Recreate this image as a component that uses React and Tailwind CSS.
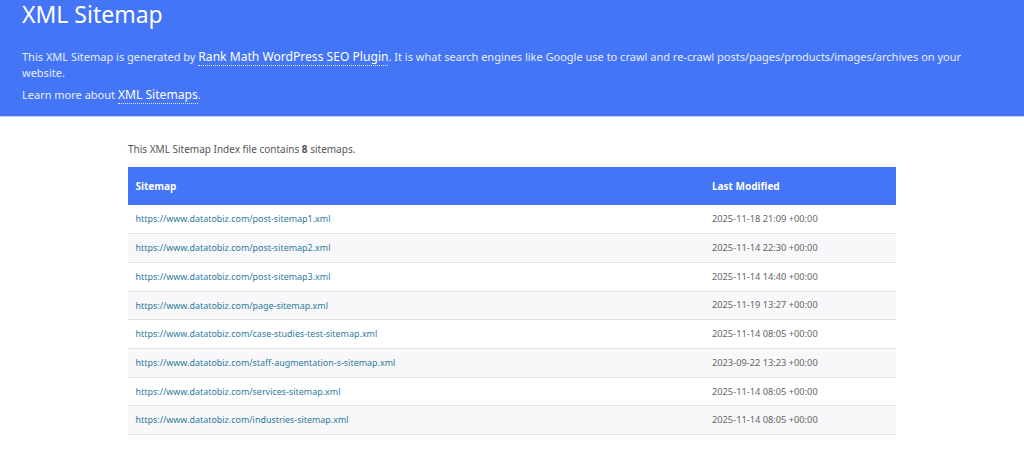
const rows = [
  ["post-sitemap1.xml", "2025-11-18 21:09 +00:00"],
  ["post-sitemap2.xml", "2025-11-14 22:30 +00:00"],
  ["post-sitemap3.xml", "2025-11-14 14:40 +00:00"],
  ["page-sitemap.xml", "2025-11-19 13:27 +00:00"],
  ["case-studies-test-sitemap.xml", "2025-11-14 08:05 +00:00"],
  ["staff-augmentation-s-sitemap.xml", "2023-09-22 13:23 +00:00"],
  ["services-sitemap.xml", "2025-11-14 08:05 +00:00"],
  ["industries-sitemap.xml", "2025-11-14 08:05 +00:00"],
];

export default function App() {
  return (
    <div className="h-[470px] overflow-hidden bg-white font-['Noto_Sans','Open_Sans',sans-serif] text-[#555]">
      <header className="h-[117px] border-b border-[#c5cdf5] bg-[#4475f7] px-[22px] text-white">
        <h1 className="text-[23px] leading-[29px]">XML Sitemap</h1>
        <p className="mt-[20px] text-[11px] leading-[16px] text-[#e8edff]">
          This XML Sitemap is generated by{" "}
          <a className="border-b border-dotted border-[#dfe6ff] text-[12.1px] text-white">Rank Math WordPress SEO Plugin</a>. It is what search engines like Google use to crawl and re-crawl posts/pages/products/images/archives on your website.
        </p>
        <p className="mt-[6px] text-[11px] leading-[16px] text-[#e8edff]">
          Learn more about{" "}
          <a className="border-b border-dotted border-[#dfe6ff] text-[12.1px] text-white">XML Sitemaps</a>.
        </p>
      </header>
      <main className="ml-[128px] w-[768px]">
        <p className="mt-[25px] mb-[10px] text-[10px] leading-[15px]">
          This XML Sitemap Index file contains <strong className="font-bold">8</strong> sitemaps.
        </p>
        <table className="w-full table-fixed border-collapse">
          <thead>
            <tr className="h-[38px] bg-[#4475f7] text-left text-[10px] text-white">
              <th className="w-[576px] pl-[7.5px] font-bold">Sitemap</th>
              <th className="pl-2 font-bold">Last Modified</th>
            </tr>
          </thead>
          <tbody>
            {rows.map(([file, date], i) => (
              <tr key={file} className={`h-[28.7px] border-b border-[#e2e2e5] ${i % 2 ? "bg-[#f8f7f9]" : "bg-white"}`}>
                <td className="pl-[7.5px] text-[8.95px] text-[#2b7c9e]">
                  <a>https://www.datatobiz.com/{file}</a>
                </td>
                <td className="pl-2 text-[9.25px] text-[#666]">{date}</td>
              </tr>
            ))}
          </tbody>
        </table>
      </main>
    </div>
  );
}
